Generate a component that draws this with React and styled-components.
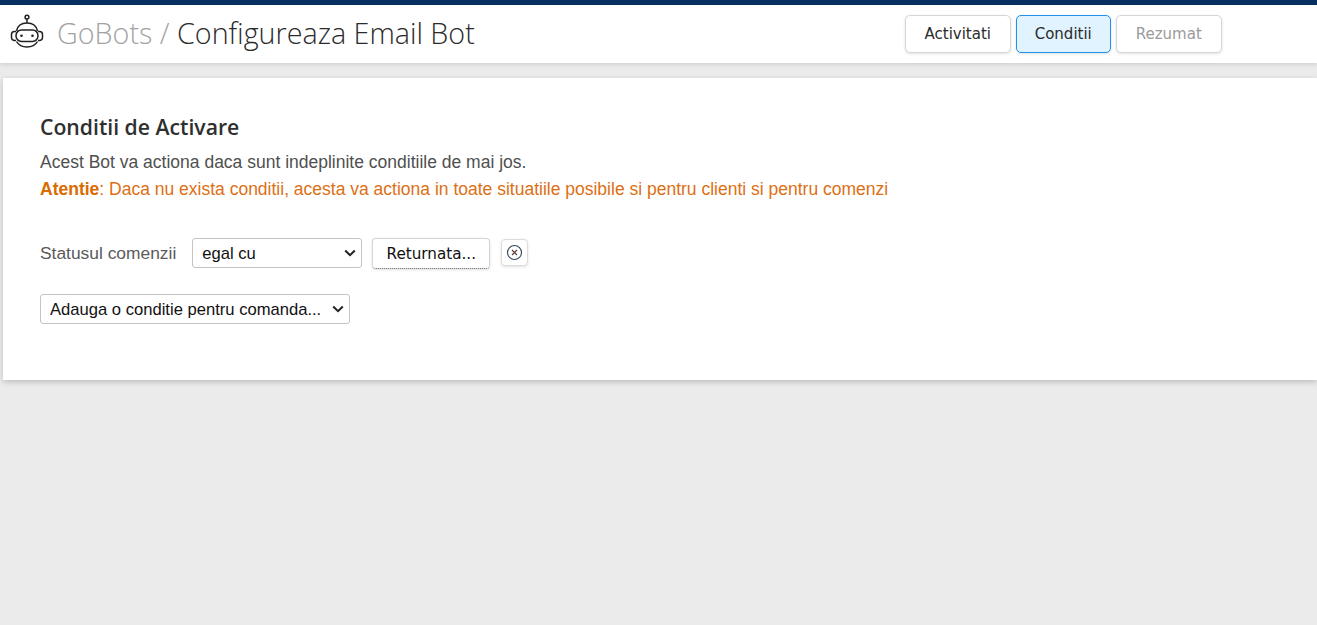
import React from "react";
import styled, { createGlobalStyle } from "styled-components";

const chevron =
  "data:image/svg+xml,%3Csvg xmlns='http://www.w3.org/2000/svg' width='12' height='8' viewBox='0 0 12 8'%3E%3Cpath d='M1.2 1.5L6 6.2l4.8-4.7' fill='none' stroke='%23222' stroke-width='2'/%3E%3C/svg%3E";

const GlobalStyle = createGlobalStyle`
  html, body {
    margin: 0;
    padding: 0;
    overflow: hidden;
  }
  body {
    background: #ebebeb;
    font-family: "Liberation Sans", Arial, sans-serif;
  }
`;

const Page = styled.div`
  width: 1317px;
  height: 625px;
  background: #ebebeb;
  overflow: hidden;
`;

const Header = styled.header`
  height: 54px;
  padding: 0 0 4px 9px;
  border-top: 5px solid #062f5f;
  background: #fff;
  box-shadow: 0 1px 5px rgba(0, 0, 0, 0.15);
  display: flex;
  align-items: center;
  position: relative;
`;

const Title = styled.h1`
  margin: 0 0 0 12px;
  font-family: "Open Sans", sans-serif;
  font-weight: 300;
  font-size: 28.7px;
  color: #2b2b2b;
  white-space: nowrap;
`;

const Muted = styled.span`
  color: #a3a3a3;
`;

const Steps = styled.nav`
  display: flex;
  gap: 5px;
  margin-left: 430px;
  margin-top: 3px;
`;

const Step = styled.button`
  height: 38px;
  width: ${(p) => p.$width}px;
  padding: 0;
  border-radius: 5px;
  border: 1px solid ${(p) => (p.$active ? "#1e90f0" : "#d6d6d6")};
  background: ${(p) => (p.$active ? "#e1f3fe" : "#fff")};
  color: ${(p) => (p.$disabled ? "#9a9a9a" : "#2b2b2b")};
  font-family: "DejaVu Sans", sans-serif;
  font-size: 15px;
  box-shadow: 0 1px 3px rgba(0, 0, 0, 0.12);
`;

const Card = styled.main`
  margin: 15px 0 0 3px;
  height: 302px;
  box-sizing: border-box;
  background: #fff;
  box-shadow: 0 2px 6px rgba(0, 0, 0, 0.2);
  padding: 35px 0 0 37px;
`;

const Heading = styled.h2`
  margin: 0 0 9px;
  font-family: "Open Sans", sans-serif;
  font-weight: 600;
  font-size: 21.2px;
  line-height: 27px;
  color: #2f2f2f;
`;

const Text = styled.p`
  margin: 0;
  font-size: 17.5px;
  line-height: 27px;
  color: #4f4f4f;
`;

const Warning = styled(Text)`
  color: #dd6f14;

  strong {
    color: #d96b00;
  }
`;

const ConditionRow = styled.div`
  display: flex;
  align-items: flex-start;
  margin-top: 35px;
`;

const Label = styled.span`
  font-size: 17.4px;
  line-height: 30px;
  color: #5a5a5a;
  margin-right: 16px;
`;

const Select = styled.select`
  appearance: none;
  height: 30px;
  width: ${(p) => p.$width}px;
  box-sizing: border-box;
  border: 1px solid #c4c4c4;
  border-radius: 3px;
  background: #fff url("${chevron}") no-repeat right 5px center;
  color: #111;
  font-family: "Liberation Sans", Arial, sans-serif;
  font-size: 16.6px;
  padding: 0 20px 0 9px;
`;

const ValueButton = styled.button`
  height: 31px;
  width: 118px;
  margin-left: 10px;
  padding: 0;
  background: #fff;
  border: 1px solid #d6d6d6;
  border-bottom: 1px dotted #555;
  border-radius: 4px;
  font-family: "DejaVu Sans", sans-serif;
  font-size: 15.2px;
  color: #111;
  box-shadow: 0 1px 3px rgba(0, 0, 0, 0.12);
`;

const RemoveButton = styled.button`
  width: 27px;
  height: 27px;
  margin: 1px 0 0 11px;
  padding: 0;
  display: flex;
  align-items: center;
  justify-content: center;
  background: #fff;
  border: 1px solid #dcdcdc;
  border-radius: 4px;
  box-shadow: 0 1px 3px rgba(0, 0, 0, 0.12);
`;

const AddRow = styled.div`
  margin-top: 25px;
`;

function RobotIcon() {
  return (
    <svg width="36" height="36" viewBox="0 0 36 36" fill="none" stroke="#222" strokeWidth="1.5">
      <circle cx="18" cy="3.2" r="1.9" />
      <path d="M18 5.2V9" />
      <path d="M7.5 17C8.5 12 12.5 9 18 9s9.5 3 10.5 8" />
      <path d="M7.5 27.5c2 3.5 6 5.5 10.5 5.5s8.500-2 10.500-5.500" />
      <rect x="7" y="16" width="22" height="11.5" rx="5.5" />
      <path d="M7 17.5H5.5a3 3 0 0 0-3 3v3a3 3 0 0 0 3 3H7" />
      <path d="M29 17.5h1.5a3 3 0 0 1 3 3v3a3 3 0 0 1-3 3H29" />
      <circle cx="12.5" cy="21.7" r="1.3" fill="#222" stroke="none" />
      <circle cx="23.5" cy="21.7" r="1.3" fill="#222" stroke="none" />
    </svg>
  );
}

function CloseIcon() {
  return (
    <svg width="17" height="17" viewBox="0 0 17 17" fill="none" strokeWidth="1.1">
      <circle cx="8.5" cy="8.5" r="7" stroke="#33465c" />
      <path d="M6 6l5 5M11 6l-5 5" stroke="#5b3a32" />
    </svg>
  );
}

export default function App() {
  return (
    <Page>
      <GlobalStyle />
      <Header>
        <RobotIcon />
        <Title>
          <Muted>GoBots /</Muted> Configureaza Email Bot
        </Title>
        <Steps>
          <Step $width={106}>Activitati</Step>
          <Step $width={95} $active>
            Conditii
          </Step>
          <Step $width={106} $disabled>
            Rezumat
          </Step>
        </Steps>
      </Header>
      <Card>
        <Heading>Conditii de Activare</Heading>
        <Text>Acest Bot va actiona daca sunt indeplinite conditiile de mai jos.</Text>
        <Warning>
          <strong>Atentie</strong>: Daca nu exista conditii, acesta va actiona in toate situatiile posibile si pentru
          clienti si pentru comenzi
        </Warning>
        <ConditionRow>
          <Label>Statusul comenzii</Label>
          <Select $width={170} defaultValue="egal">
            <option value="egal">egal cu</option>
          </Select>
          <ValueButton>Returnata...</ValueButton>
          <RemoveButton>
            <CloseIcon />
          </RemoveButton>
        </ConditionRow>
        <AddRow>
          <Select $width={310} defaultValue="add">
            <option value="add">Adauga o conditie pentru comanda...</option>
          </Select>
        </AddRow>
      </Card>
    </Page>
  );
}
